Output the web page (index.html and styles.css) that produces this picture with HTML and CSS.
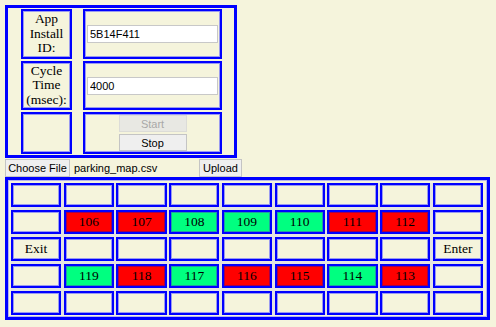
FILE: index.html
```html
<!DOCTYPE html>
<html lang="en">
<head>
  <meta charset="UTF-8" />
  <title>Parking Map</title>
  <link rel="stylesheet" href="styles.css">
</head>
<body>
  <div class="settings">
    <div class="cell label">App Install ID:</div>
    <div class="cell field"><input type="text" value="5B14F411"></div>
    <div class="cell label">Cycle Time (msec):</div>
    <div class="cell field"><input type="text" value="4000"></div>
    <div class="cell"></div>
    <div class="cell controls">
      <button disabled>Start</button>
      <button>Stop</button>
    </div>
  </div>
  <div class="upload-row">
    <button class="choose">Choose File</button>
    <span class="file-name">parking_map.csv</span>
    <button class="upload">Upload</button>
  </div>
  <div class="lot">
    <div class="grid">
      <div class="spot"></div><div class="spot"></div><div class="spot"></div><div class="spot"></div><div class="spot"></div><div class="spot"></div><div class="spot"></div><div class="spot"></div><div class="spot"></div>
      <div class="spot"></div>
      <div class="spot taken">106</div>
      <div class="spot taken">107</div>
      <div class="spot free">108</div>
      <div class="spot free">109</div>
      <div class="spot free">110</div>
      <div class="spot taken">111</div>
      <div class="spot taken">112</div>
      <div class="spot"></div>
      <div class="spot">Exit</div>
      <div class="spot"></div><div class="spot"></div><div class="spot"></div><div class="spot"></div><div class="spot"></div><div class="spot"></div><div class="spot"></div>
      <div class="spot">Enter</div>
      <div class="spot"></div>
      <div class="spot free">119</div>
      <div class="spot taken">118</div>
      <div class="spot free">117</div>
      <div class="spot taken">116</div>
      <div class="spot taken">115</div>
      <div class="spot free">114</div>
      <div class="spot taken">113</div>
      <div class="spot"></div>
      <div class="spot"></div><div class="spot"></div><div class="spot"></div><div class="spot"></div><div class="spot"></div><div class="spot"></div><div class="spot"></div><div class="spot"></div><div class="spot"></div>
    </div>
  </div>
</body>
</html>
```

FILE: styles.css
```css
* { box-sizing: border-box; }
body { margin: 0; padding: 5px; background-color: #f5f4dc; font-family: "Liberation Serif", "Times New Roman", serif; color: black; }
.settings { width: 232px; border: 3px solid #0000ff; padding: 1px 12px 1px 13px; display: grid; grid-template-columns: 51px 139px; grid-template-rows: 50px 49px 42px; column-gap: 11px; row-gap: 2px; }
.cell { border: 2px solid #0000ff; box-shadow: inset 0 0 0 1px #9a9af0; }
.label { display: flex; align-items: center; justify-content: center; text-align: center; font-size: 13.5px; line-height: 14.5px; padding: 0 1px; }
.field { display: flex; align-items: center; padding: 0 1px; }
.field input { width: 100%; height: 18px; border: 1px solid #c8c8c8; background: white; font-family: "Liberation Sans", Arial, sans-serif; font-size: 11px; padding: 0 2px; margin: 0 1px; }
.controls { display: flex; flex-direction: column; align-items: center; justify-content: center; gap: 2px; }
button { font-family: "Liberation Sans", Arial, sans-serif; font-size: 11px; color: black; background-color: #efefef; border: 1px solid #c4c4c4; padding: 0; white-space: nowrap; }
.controls button { width: 68px; height: 17px; }
.controls button:disabled { color: #a8a8a8; background-color: #e8e8e3; border-color: #dcdcd8; }
.upload-row { display: flex; align-items: center; height: 18px; margin-top: 1px; }
.choose { width: 65px; height: 18px; }
.file-name { font-family: "Liberation Sans", Arial, sans-serif; font-size: 11px; width: 129px; padding-left: 4px; }
.upload { width: 43px; height: 18px; }
.lot { width: 485px; border: 3px solid #0000ff; box-shadow: inset 0 0 0 1px #b4b4f0; padding: 3px 4px 2px 3px; }
.grid { display: grid; grid-template-columns: repeat(9, 1fr); grid-auto-rows: 24px; gap: 3px 2.5px; background-color: #e4e4e0; }
.spot { border: 2px solid #0000ff; box-shadow: inset 0 0 0 1px #9a9af0; background-color: #f5f4dc; display: flex; align-items: center; justify-content: center; font-size: 13.5px; }
.taken { background-color: #ff0000; box-shadow: inset 0 0 0 1px #a00050; }
.free { background-color: #00ff80; box-shadow: inset 0 0 0 1px #20a0a0; }
```
